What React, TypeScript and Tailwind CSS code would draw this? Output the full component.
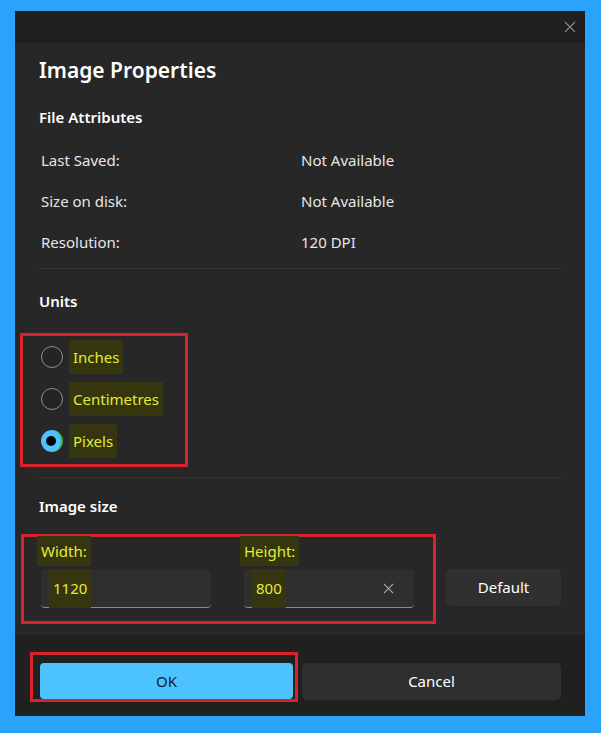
import React, { useState } from 'react';

const font = { fontFamily: '"Segoe UI", "Noto Sans", "Open Sans", sans-serif' };

const Hl: React.FC<{ children: React.ReactNode; className?: string }> = ({ children, className = '' }) => (
  <span className={`bg-[#35360f] text-[#e3ec34] px-[4px] -ml-[4px] ${className}`}>{children}</span>
);

const XIcon: React.FC<{ size: number; className?: string }> = ({ size, className }) => (
  <svg width={size} height={size} viewBox="0 0 12 12" className={className} fill="none" stroke="currentColor" strokeWidth="1.1">
    <path d="M1 1L11 11M11 1L1 11" />
  </svg>
);

const Radio: React.FC<{ label: string; checked: boolean; onClick: () => void }> = ({ label, checked, onClick }) => (
  <button onClick={onClick} className="h-[42px] flex items-center gap-[10px] text-[15px]">
    {checked ? (
      <span className="w-[22px] h-[22px] rounded-full bg-[#4cc2ff] flex items-center justify-center border-r-[2px] border-[#3fb33a]">
        <span className="w-[10px] h-[10px] rounded-full bg-black" />
      </span>
    ) : (
      <span className="w-[22px] h-[22px] rounded-full border-[1.5px] border-[#8d8d8d] bg-[#242424]" />
    )}
    <Hl className="py-[6px]">{label}</Hl>
  </button>
);

const App: React.FC = () => {
  const [unit, setUnit] = useState('Pixels');

  const attrs = [
    { label: 'Last Saved:', value: 'Not Available' },
    { label: 'Size on disk:', value: 'Not Available' },
    { label: 'Resolution:', value: '120 DPI' },
  ];

  return (
    <div className="w-[601px] h-[733px] bg-[#2aa4fb] pt-[11px] pl-[15px]" style={font}>
      <div className="w-[570px] h-[705px] flex flex-col text-[#e6e6e6]">
        <div className="h-[32px] bg-[#1f1f1f] flex items-center justify-end pr-[9px]">
          <XIcon size={12} className="text-[#8a8a8a]" />
        </div>

        <div className="flex-1 bg-[#272727] px-[24px]">
          <div className="h-[56px] flex items-center text-[21px] font-semibold text-white">Image Properties</div>
          <div className="h-[36px] flex items-center text-[15px] font-semibold text-white">File Attributes</div>
          <div className="mt-[5px]">
            {attrs.map((a) => (
              <div key={a.label} className="h-[41px] flex items-center text-[15px] pl-[2px]">
                <span className="w-[260px]">{a.label}</span>
                <span>{a.value}</span>
              </div>
            ))}
          </div>
          <div className="mt-[5px] h-px bg-[#333333]" />

          <div className="h-[64px] flex items-center text-[15px] font-semibold text-white">Units</div>
          <div className="-ml-[19px] w-[168px] border-[3px] border-[#d9222c] pl-[18px] pb-[2px] flex flex-col items-start">
            {['Inches', 'Centimetres', 'Pixels'].map((u) => (
              <Radio key={u} label={u} checked={unit === u} onClick={() => setUnit(u)} />
            ))}
          </div>
          <div className="mt-[10px] h-px bg-[#333333]" />

          <div className="h-[56px] flex items-center text-[15px] font-semibold text-white">Image size</div>
          <div className="flex items-end -ml-[18px]">
            <div className="w-[415px] border-[3px] border-[#d9222c] pl-[17px] pr-[19px] pb-[13px] flex gap-[33px]">
              <div className="w-[170px]">
                <div className="h-[28px] flex items-center text-[15px]"><Hl className="py-[4px]">Width:</Hl></div>
                <div className="mt-[5px] h-[38px] rounded-[4px] bg-[#2f2f2f] border-b border-[#8a8a8a] flex items-center pl-[12px] text-[15px]">
                  <Hl className="py-[8px]">1120</Hl>
                </div>
              </div>
              <div className="w-[170px]">
                <div className="h-[28px] flex items-center text-[15px]"><Hl className="py-[4px]">Height:</Hl></div>
                <div className="mt-[5px] h-[38px] rounded-[4px] bg-[#2f2f2f] border-b border-[#8a8a8a] flex items-center justify-between pl-[12px] pr-[20px] text-[15px]">
                  <Hl className="py-[8px]">800</Hl>
                  <XIcon size={11} className="text-[#b0b0b0]" />
                </div>
              </div>
            </div>
            <button className="ml-[10px] mb-[18px] w-[115px] h-[37px] rounded-[5px] bg-[#303030] text-[15px] text-white">Default</button>
          </div>
        </div>

        <div className="h-[81px] bg-[#202020] pl-[15px] pt-[17px] flex items-start">
          <div className="border-[3px] border-[#d9222c] pl-[7px] pt-[8px] pr-[2px]">
            <button className="w-[253px] h-[36px] rounded-[4px] bg-[#4cc2ff] text-[15px] text-[#0b1f33]">OK</button>
          </div>
          <button className="ml-[4px] mt-[11px] w-[259px] h-[37px] rounded-[5px] bg-[#2f2f2f] text-[15px] text-white">Cancel</button>
        </div>
      </div>
    </div>
  );
};

export default App;
